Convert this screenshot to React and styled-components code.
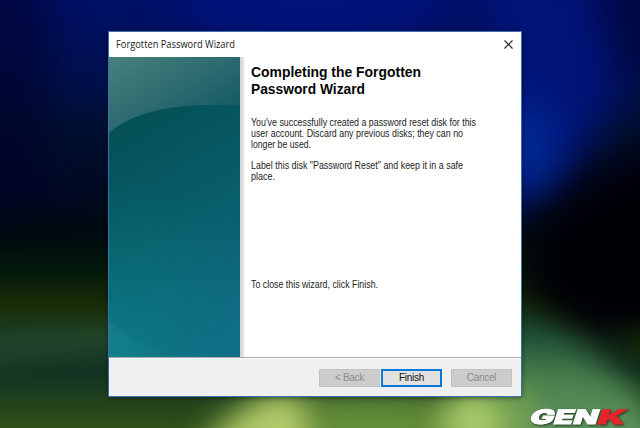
import React from "react";
import styled, { createGlobalStyle } from "styled-components";

const Global = createGlobalStyle`
  * { box-sizing: border-box; }
  body { margin: 0; overflow: hidden; font-family: "Liberation Sans", Arial, sans-serif; }
`;

const Desktop = styled.main`
  position: relative;
  width: 640px;
  height: 428px;
  padding: 31px 0 0 108px;
  overflow: hidden;
  background: #020817;
`;

const WallpaperArt = styled.svg`
  position: absolute;
  inset: 0;
`;

const Dialog = styled.section`
  position: relative;
  display: flex;
  flex-direction: column;
  width: 414px;
  height: 366px;
  border: 1px solid #3c70aa;
  background: #fff;
  box-shadow: 0 1px 5px #0006;
`;

const TitleBar = styled.header`
  display: flex;
  justify-content: space-between;
  height: 25px;
  flex: none;
  padding: 6px 7px 0 7px;
`;

const Phrase = styled.svg`
  display: block;
  overflow: visible;
  flex: none;
`;

const CloseButton = styled.button`
  width: 10px;
  height: 12px;
  padding: 1px 0 0;
  border: 0;
  background: transparent;
  svg { display: block; }
`;

const Content = styled.div`
  display: flex;
  height: 300px;
  flex: none;
`;

const Artwork = styled.svg`
  display: block;
  width: 131px;
  height: 300px;
  flex: none;
`;

const Copy = styled.div`
  flex: 1;
  padding: 7px 0 0 11px;
  background: linear-gradient(90deg, #c8d0d1 0, #dadada 1px, #dedede 3px, #fff 5px);
`;

const Heading = styled.h1`
  margin: 0 0 19px;
`;

const Paragraph = styled.p`
  margin: 0 0 ${({ $gap = 0 }) => $gap}px;
`;

const Footer = styled.footer`
  display: flex;
  justify-content: flex-end;
  height: 39px;
  padding: 11px 9px 0;
  border-top: 1px solid #aaa;
  box-shadow: inset 0 1px #fff;
  background: #f0f0f0;
`;

const WizardButton = styled.button`
  width: 61px;
  height: 18px;
  margin-left: ${({ $gap = 0 }) => $gap}px;
  padding: 0;
  border: ${({ $primary }) => ($primary ? "2px solid #0879d8" : "1px solid #c2c2c2")};
  background: ${({ $primary }) => ($primary ? "#e1e1e1" : "#cccccc")};
  color: ${({ $primary }) => ($primary ? "#111" : "#8b8b8b")};
  font: 10px/14px "Liberation Sans", Arial, sans-serif;
  letter-spacing: -0.3px;
`;

const Brand = styled.svg`
  position: absolute;
  left: 524px;
  top: 404px;
  filter: drop-shadow(1px 1px 1px #0009);
`;

function Wallpaper() {
  return (
    <WallpaperArt width="640" height="428" viewBox="0 0 640 428" aria-hidden="true">
      <defs>
        <linearGradient id="night" x2="0" y2="1">
          <stop stopColor="#001068" /><stop offset=".2" stopColor="#00104a" /><stop offset=".3" stopColor="#001030" /><stop offset=".44" stopColor="#000a24" />
          <stop offset=".54" stopColor="#000a10" /><stop offset=".63" stopColor="#03180a" /><stop offset=".71" stopColor="#192c08" />
          <stop offset=".79" stopColor="#1c3d25" /><stop offset=".87" stopColor="#113322" /><stop offset="1" stopColor="#305019" />
        </linearGradient>
        <linearGradient id="meadow" gradientUnits="userSpaceOnUse" x1="0" y1="295" x2="0" y2="425">
          <stop stopColor="#052821" /><stop offset=".3" stopColor="#1b4c38" /><stop offset=".6" stopColor="#467d4b" /><stop offset="1" stopColor="#5c935c" />
        </linearGradient>
        <filter id="soft" x="-60%" y="-60%" width="220%" height="220%" colorInterpolationFilters="sRGB"><feGaussianBlur stdDeviation="20" /></filter>
        <filter id="glowBlur" x="-60%" y="-100%" width="220%" height="300%" colorInterpolationFilters="sRGB"><feGaussianBlur stdDeviation="14" /></filter>
      </defs>
      <path fill="url(#night)" d="M0 0H640V428H0Z" />
      <path fill="#000028" opacity=".55" filter="url(#soft)" d="M-60-60H50V205H-60Z" />
      <ellipse cx="310" cy="5" rx="140" ry="35" fill="#00127d" filter="url(#soft)" />
      <path d="M-30 350L130 325V342L-30 367Z" fill="#2b5835" opacity=".55" filter="url(#glowBlur)" />
      <path d="M490-40L600-30L620 50L610 115L570 175L490 220Z" fill="#001478" filter="url(#soft)" />
      <ellipse cx="528" cy="148" rx="25" ry="48" fill="#0034a0" opacity=".8" filter="url(#soft)" />
      <path d="M590-30H690V105L620 65Z" fill="#00063c" opacity=".85" filter="url(#soft)" />
      <path d="M700 125L595 175L545 220L520 290L570 330L700 370Z" fill="#000007" filter="url(#soft)" />
      <path d="M490 315L535 322L582 350L640 393L670 470H480Z" fill="url(#meadow)" filter="url(#glowBlur)" />
      <path d="M618 335L700 325V410Z" fill="#1a3207" filter="url(#glowBlur)" />
      <ellipse cx="365" cy="430" rx="150" ry="38" fill="#66903c" filter="url(#soft)" />
      <path d="M190 455L228 426L265 397H302L310 455Z" fill="#b4ca6a" filter="url(#glowBlur)" />
      <ellipse cx="475" cy="423" rx="35" ry="34" fill="#a4c768" filter="url(#glowBlur)" />
      <ellipse cx="520" cy="415" rx="15" ry="28" fill="#82a94f" opacity=".7" filter="url(#glowBlur)" />
    </WallpaperArt>
  );
}

function Line({ text, width, height = 10.8, size = 10.3, weight = 400, baseline = 9, family = "Liberation Sans" }) {
  return (
    <Phrase width={width} height={height}>
      <text x="0" y={baseline} fontFamily={`${family}, sans-serif`} fontSize={size} fontWeight={weight} textLength={width} lengthAdjust="spacingAndGlyphs" fill={weight === 700 ? "#050505" : "#222"}>{text}</text>
    </Phrase>
  );
}

export default function App() {
  return (
    <>
      <Global />
      <Desktop>
        <Wallpaper />
        <Dialog>
          <TitleBar>
            <Line text="Forgotten Password Wizard" width={119} height={15} baseline={10} size={10} family="Open Sans" />
            <CloseButton aria-label="Close">
              <svg width="9" height="9" viewBox="0 0 9 9" stroke="#222" strokeWidth="1.1"><path d="M.5.5l8 8M8.5.5l-8 8" /></svg>
            </CloseButton>
          </TitleBar>
          <Content>
            <Artwork viewBox="0 0 131 300">
              <defs>
                <linearGradient id="top" gradientUnits="userSpaceOnUse" x1="15" y1="0" x2="75" y2="100">
                  <stop stopColor="#457e7b" /><stop offset="1" stopColor="#105562" />
                </linearGradient>
                <linearGradient id="sea" x1=".35" y1="0" x2=".65" y2="1">
                  <stop stopColor="#045056" /><stop offset=".45" stopColor="#085d69" /><stop offset="1" stopColor="#126b88" />
                </linearGradient>
                <radialGradient id="glow" gradientUnits="userSpaceOnUse" cx="0" cy="300" r="180">
                  <stop stopColor="#0b808b" stopOpacity=".75" /><stop offset="1" stopColor="#087779" stopOpacity="0" />
                </radialGradient>
                <linearGradient id="corner" x2="1"><stop stopColor="#4badac" stopOpacity=".13" /><stop offset="1" stopColor="#4badac" stopOpacity="0" /></linearGradient>
              </defs>
              <path fill="url(#top)" d="M0 0H131V120H0Z" />
              <path fill="url(#sea)" d="M0 76C25 54 66 48 100 48Q118 48 131 49V300H0Z" />
              <path fill="url(#glow)" d="M0 76C25 54 66 48 100 48Q118 48 131 49V300H0Z" />
              <path fill="url(#corner)" d="M0 265Q25 287 70 300H0Z" />
            </Artwork>
            <Copy>
              <Heading>
                <Line text="Completing the Forgotten" width={170} height={17} baseline={13} size={14} weight={700} />
                <Line text="Password Wizard" width={114} height={17} baseline={13} size={14} weight={700} />
              </Heading>
              <Paragraph $gap={11}>
                <Line text="You've successfully created a password reset disk for this" width={225} />
                <Line text="user account. Discard any previous disks; they can no" width={212} />
                <Line text="longer be used." width={60} />
              </Paragraph>
              <Paragraph $gap={97.3}>
                <Line text={'Label this disk "Password Reset" and keep it in a safe'} width={212} />
                <Line text="place." width={24} />
              </Paragraph>
              <Paragraph><Line text="To close this wizard, click Finish." width={127} /></Paragraph>
            </Copy>
          </Content>
          <Footer>
            <WizardButton disabled>&lt; Back</WizardButton>
            <WizardButton $primary $gap={1}>Finish</WizardButton>
            <WizardButton disabled $gap={9}>Cancel</WizardButton>
          </Footer>
        </Dialog>
        <Brand width="112" height="24" viewBox="0 0 112 24" aria-label="GENK">
          <g fontFamily="Inter, sans-serif" fontWeight="900" fontSize="20" strokeWidth=".8" transform="translate(4.5 19.5) skewX(-18)">
            <text fill="#fff" stroke="#fff" textLength="68" lengthAdjust="spacingAndGlyphs">GEN</text>
            <text x="68" fill="#e5252b" stroke="#e5252b" textLength="27" lengthAdjust="spacingAndGlyphs">K</text>
          </g>
        </Brand>
      </Desktop>
    </>
  );
}
